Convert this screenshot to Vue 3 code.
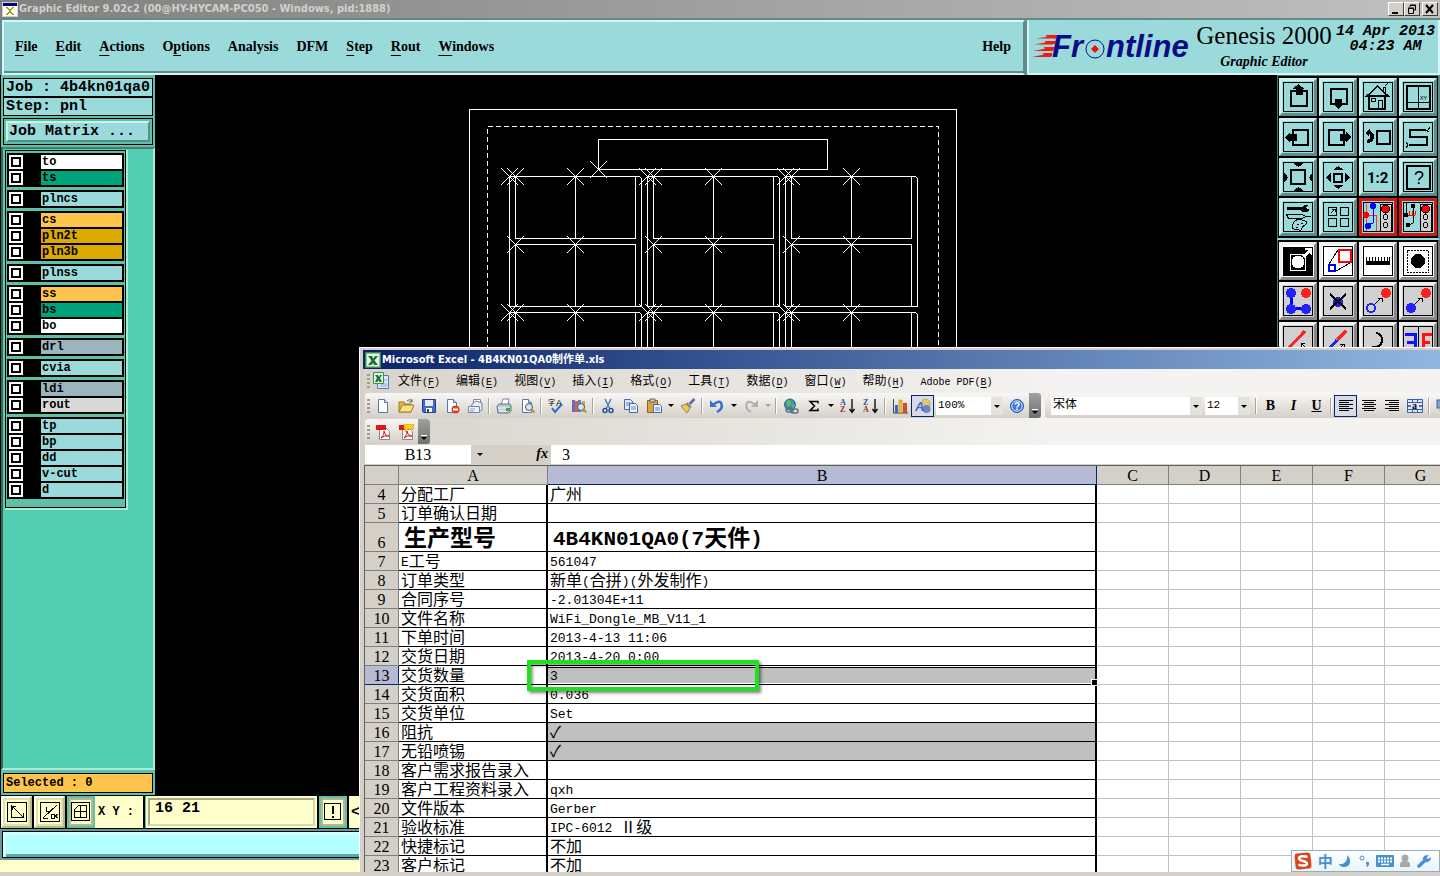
<template>
    <div class="desktop">
        <header class="titlebar">
            <svg class="x-logo" width="16" height="15" viewBox="0 0 16 15" shape-rendering="crispEdges">
                <rect width="16" height="15" fill="#d4d0c8" />
                <rect x="1" y="1" width="14" height="3" fill="#000080" />
                <rect x="1" y="4" width="14" height="10" fill="#fff" />
                <path d="M4 5h2l2 3 2-3h2l-3 4 3 4h-2l-2-3-2 3H4l3-4z" fill="#a8a000" />
            </svg>
            <h1>Graphic Editor 9.02c2 (00@HY-HYCAM-PC050 - Windows, pid:1888)</h1>
            <div class="win-buttons">
                <button aria-label="Minimize"><svg width="12" height="10"><path d="M2 8h6v2H2z" /></svg></button>
                <button aria-label="Restore"><svg width="12" height="10" fill="none" stroke="#000"><path d="M4 3V1.5h5.500V6H8M4 1h6M2.500 4.500h5V9.500h-5zM2 4h6" /></svg></button>
                <button aria-label="Close" class="close"><svg width="12" height="10" stroke="#000" stroke-width="2"><path d="M2 1l7 8M9 1L2 9" /></svg></button>
            </div>
        </header>

        <div class="top">
            <nav class="menubar">
                <button v-for="m in menus" :key="m.text">{{ m.text.slice(0, m.key) }}<u>{{ m.text.slice(m.key, m.key + 1) }}</u>{{ m.text.slice(m.key + 1) }}</button>
                <button class="help">Help</button>
            </nav>
            <div class="brand">
                <svg class="frontline" width="164" height="34" viewBox="0 0 164 34">
                    <g fill="#f01c10">
                        <path d="M4 9.500L26 6v3.500zM2 15.500L22 12l-1 3.500zM1 22l21-4-1 4zM0 28l20-4-1 4z" />
                        <path d="M14 6h12v3H15zM13 12h11v3H14zM12 18h11v3H13zM11 24h9v3H12z" />
                    </g>
                    <g class="logo-text" fill="#0c0c84">
                        <text x="20" y="28">Fr</text>
                        <text x="74" y="28">ntline</text>
                    </g>
                    <circle cx="63" cy="20" r="9" fill="none" stroke="#0c0c84" stroke-width="1" />
                    <path d="M63 16l4 4-4 4-4-4z" fill="#f01010" />
                </svg>
                <div class="product">
                    <strong>Genesis 2000</strong>
                    <em>Graphic Editor</em>
                </div>
                <time>14 Apr 2013<br>04:23 AM</time>
            </div>
        </div>

        <main class="work">
            <aside class="side">
                <div class="job-line">Job : 4b4kn01qa0</div>
                <div class="job-line">Step: pnl</div>
                <div class="matrix"><button>Job Matrix ...</button></div>
                <div class="layer-scroll">
                    <div class="layer-list">
                        <div v-for="(group, g) in layerGroups" :key="g" class="layer-group">
                            <label v-for="l in group" :key="l[0]" class="layer">
                                <input type="checkbox">
                                <span :class="l[1]">{{ l[0] }}</span>
                            </label>
                        </div>
                    </div>
                </div>
                <div class="selected">Selected : 0</div>
            </aside>

            <div class="canvas">
                <svg width="520" height="300" fill="none" stroke="#fff" shape-rendering="crispEdges">
                    <path d="M9.500 300V19.500H496.500V300" />
                    <path d="M27.500 300V36.500H478.500V300" stroke-dasharray="5 3" />
                    <path d="M138.500 49.500h229v30h-229z" />
                    <path :d="cross(138, 79)" />
                    <path v-for="(d, i) in panelPaths" :key="i" :d="d" />
                </svg>
            </div>

            <div class="tools">
                <div class="tool-grid teal">
                    <button v-for="(t, i) in viewTools" :key="i" :class="{ red: i > 13 }" :aria-label="t[0]">
                        <svg width="32" height="32" viewBox="3 3 32 32" v-html="t[1]"></svg>
                    </button>
                </div>
                <div class="tool-grid gray">
                    <button v-for="(t, i) in editTools" :key="i" :class="{ white: i < 4 }" :aria-label="t[0]">
                        <svg width="32" height="32" viewBox="3 3 32 32" v-html="t[1]"></svg>
                    </button>
                </div>
            </div>
        </main>

        <div class="coords">
            <button v-for="(b, i) in coordButtons" :key="i" :class="{ on: i === 2 }" :aria-label="b[0]">
                <svg width="20" height="20" fill="none" stroke="#000" shape-rendering="crispEdges" v-html="b[1]"></svg>
            </button>
            <label for="xy">X Y :</label>
            <div class="xy"><input id="xy" value="16 21"></div>
            <button class="on bang" aria-label="Alert">
                <svg width="18" height="18" fill="none" stroke="#000" shape-rendering="crispEdges"><path d="M.5.5h16v16H.5z" /><path d="M8.500 3v8M8.500 13v2" stroke-width="2" /></svg>
            </button>
            <button class="less">&lt;</button>
        </div>
        <div class="status"><div></div></div>
        <div class="strip"></div>

        <section class="excel">
            <header class="excel-title">
                <svg width="16" height="16" viewBox="0 0 16 16" v-html="excelLogo"></svg>
                <h2>Microsoft Excel - 4B4KN01QA0制作单.xls</h2>
            </header>
            <nav class="excel-menu">
                <i class="grip"></i>
                <svg width="18" height="18" viewBox="0 0 18 18" v-html="docLogo"></svg>
                <button v-for="m in excelMenus" :key="m[0]"><Mixed :text="m[0] + '('" /><u class="half">{{ m[1] }}</u><span class="half">)</span></button>
            </nav>
            <div class="bars">
                <div class="bar">
                    <i class="grip"></i>
                    <template v-for="(t, i) in barTools" :key="i">
                        <i v-if="t === '|'" class="sep"></i>
                        <button v-else-if="t === 'v' || t === 'vg'" class="drop" :class="{ dim: t === 'vg' }" aria-label="More"></button>
                        <button v-else class="tb" :class="{ active: t === 'draw' }" :aria-label="t">
                            <svg width="16" height="16" viewBox="0 0 16 16" v-html="glyphs[t]"></svg>
                        </button>
                    </template>
                    <span class="combo zoom"><select aria-label="Zoom"><option>100%</option></select></span>
                    <button class="tb" aria-label="Help"><svg width="16" height="16" viewBox="0 0 16 16" v-html="glyphs.help"></svg></button>
                    <button class="overflow" aria-label="Toolbar options"></button>
                </div>
                <div class="bar grow">
                    <i class="grip"></i>
                    <span class="combo font"><select aria-label="Font"><option>宋体</option></select></span>
                    <span class="combo size"><select aria-label="Size"><option>12</option></select></span>
                    <i class="sep"></i>
                    <button class="tb letter"><b>B</b></button>
                    <button class="tb letter"><i>I</i></button>
                    <button class="tb letter"><u>U</u></button>
                    <i class="sep"></i>
                    <button v-for="a in ['left', 'center', 'right', 'merge']" :key="a" class="tb" :class="{ active: a === 'left' }" :aria-label="a">
                        <svg width="16" height="16" viewBox="0 0 16 16" v-html="glyphs[a]"></svg>
                    </button>
                    <i class="sep"></i>
                    <button class="tb" aria-label="Currency"><svg width="16" height="16" viewBox="0 0 16 16" v-html="glyphs.money"></svg></button>
                </div>
            </div>
            <div class="bars second">
                <div class="bar">
                    <i class="grip"></i>
                    <button v-for="p in ['pdf', 'pdfMail']" :key="p" class="tb" :aria-label="p">
                        <svg width="16" height="16" viewBox="0 0 16 16" v-html="glyphs[p]"></svg>
                    </button>
                    <button class="overflow" aria-label="Toolbar options"></button>
                </div>
            </div>
            <div class="formula">
                <input class="name-box" value="B13" aria-label="Name box">
                <button class="drop" aria-label="Names"></button>
                <em>fx</em>
                <input class="formula-box" value="3" aria-label="Formula">
            </div>
            <div class="sheet">
                <table>
                    <colgroup>
                        <col class="w-num"><col class="w-a"><col class="w-b">
                        <col v-for="c in spare" :key="c" class="w-c">
                    </colgroup>
                    <thead>
                        <tr>
                            <th></th>
                            <th>A</th>
                            <th class="picked">B</th>
                            <th v-for="c in spare" :key="c">{{ c }}</th>
                        </tr>
                    </thead>
                    <tbody>
                        <tr v-for="(row, i) in rows" :key="i" :class="{ tall: i === 2, current: i === 9 }">
                            <th>{{ i + 4 }}</th>
                            <td class="a"><div class="cell"><Mixed :text="row[0]" /></div></td>
                            <td class="b" :class="{ fill: row[2] }"><div class="cell"><Mixed :text="row[1]" /></div></td>
                            <td v-for="c in spare" :key="c"></td>
                        </tr>
                    </tbody>
                </table>
                <div class="mark"></div>
            </div>
        </section>

        <div class="ime">
            <svg width="18" height="18" viewBox="0 0 18 18">
                <rect x="1" y="1" width="16" height="16" rx="3" fill="#d9461c" transform="rotate(-6 9 9)" />
                <path d="M13.500 5C10 3.500 5 4 5 6.500S13 9 13 11.500 7 14 4.500 12.500" fill="none" stroke="#fff" stroke-width="2.500" />
            </svg>
            <span>中</span>
            <svg width="14" height="14" viewBox="0 0 14 14"><path d="M9 1c5 4 4 12-3 12-3 0-5-2-5-3 5 1 9-3 8-9z" fill="#4a8fd0" /></svg>
            <svg width="12" height="14" viewBox="0 0 12 14"><circle cx="4" cy="4" r="2" fill="none" stroke="#4a8fd0" /><path d="M8 8h3v2q0 2-2 3l-1-.5q1-1 1-2H8z" fill="#4a8fd0" /></svg>
            <svg width="18" height="12" viewBox="0 0 18 12"><rect width="18" height="12" rx="1" fill="#4a8fd0" /><path d="M2 3.500h14M2 6.500h14" stroke="#fff" stroke-width="2" stroke-dasharray="2 1" /><path d="M5 9.500h8" stroke="#fff" stroke-width="1.500" /></svg>
            <svg width="12" height="14" viewBox="0 0 12 14" fill="#a8a8a8"><circle cx="6" cy="4" r="3.500" /><path d="M1 13V10q0-3 5-3t5 3v3z" /></svg>
            <svg width="14" height="14" viewBox="0 0 14 14"><path d="M2 12L8.500 6" stroke="#4a8fd0" stroke-width="3.500" stroke-linecap="round" /><path d="M12 1L9.500 4l1.500 1 2.500-2q1 4-3 5T6 5t6-4z" fill="#4a8fd0" /></svg>
        </div>
    </div>
</template>

<script setup>
import { h } from 'vue'

// key: index of the underlined letter, past the end when there is none
const menus = [
    { text: 'File', key: 0 },
    { text: 'Edit', key: 0 },
    { text: 'Actions', key: 0 },
    { text: 'Options', key: 1 },
    { text: 'Analysis', key: 8 },
    { text: 'DFM', key: 3 },
    { text: 'Step', key: 0 },
    { text: 'Rout', key: 0 },
    { text: 'Windows', key: 0 }
]

const layerGroups = [
    [['to', 'white'], ['ts', 'green']],
    [['plncs', 'aqua']],
    [['cs', 'orange'], ['pln2t', 'gold'], ['pln3b', 'gold']],
    [['plnss', 'aqua']],
    [['ss', 'orange'], ['bs', 'green'], ['bo', 'white']],
    [['drl', 'slate']],
    [['cvia', 'aqua']],
    [['ldi', 'slate'], ['rout', 'silver']],
    [['tp', 'aqua'], ['bp', 'aqua'], ['dd', 'aqua'], ['v-cut', 'aqua'], ['d', 'aqua']]
]

// Panel drawing
function cross(x, y) {
    return `M${x - 8} ${y - 8}l17 17M${x + 9} ${y - 8}l-17 17`
}

function panel(x, y) {
    return [
        `M${x + 0.5} ${y + 130.5}V${y + 0.5}h130l2 2v128z`,
        `M${x + 6.5} ${y + 0.5}v62h120v-62M${x + 66.5} ${y}v62`,
        `M${x + 6.5} ${y + 130}V${y + 68.5}h120v62M${x + 66.5} ${y + 68}v62`,
        cross(x, y), cross(x + 6, y), cross(x + 66, y),
        cross(x + 6, y + 68), cross(x + 66, y + 68)
    ].join('')
}

const panelPaths = []
for (const y of [86, 222]) {
    for (const x of [49, 187, 325]) panelPaths.push(panel(x, y))
}

// Tool icons, drawn on a 38px button
const frame = '<path d="M4.500 4.500h29v29h-29z" fill="none" stroke="#000"/>'
const box = (x, y, w, hgt, sw = 2) => `<rect x="${x}" y="${y}" width="${w}" height="${hgt}" fill="none" stroke="#000" stroke-width="${sw}"/>`
const lights = '<rect x="21" y="6" width="11" height="27" fill="#d0d0d0" stroke="#000"/><circle cx="26.500" cy="11" r="4" fill="#f00" stroke="#000"/><circle cx="26.500" cy="19" r="2.500" fill="none" stroke="#000"/><circle cx="26.500" cy="27" r="2.500" fill="none" stroke="#000"/>'

const viewTools = [
    ['Pan up', frame + box(12, 13, 16, 15) + '<path d="M19.500 6l6 5h-2v6h-7v-6h-3z"/>'],
    ['Pan down', frame + box(12, 11, 16, 15) + '<path d="M16 21h7v5h2l-5.500 5-5.500-5h2z"/>'],
    ['Home', frame + '<g fill="none" stroke="#000"><path d="M10 18v13h16V18M8 18L18.500 8 29 18z" stroke-width="1.500"/><path d="M24.500 13V9h2v6M26 8l3-3"/><path d="M12.500 20.500h4v3h-4zM19.500 31v-9h4v9"/></g>'],
    ['Coordinates', frame + box(8, 8, 23, 23) + '<path d="M19.500 8v23M8 24.500h23" stroke="#000"/><text x="21" y="22" font-size="6" font-family="Liberation Mono">XY</text>'],
    ['Pan left', frame + box(14, 12, 15, 15) + '<path d="M6 19l5-5v2h7v7h-7v2z"/>'],
    ['Pan right', frame + box(10, 12, 15, 15) + '<path d="M32 19l-5-5v2h-6v7h6v2z"/>'],
    ['Previous view', frame + box(18, 13, 13, 13) + '<path d="M6 15l5-5v3q5 2 4 7t-7 5v-3q4-1 3-5l-1-1v3z"/>'],
    ['Serpentine', frame + '<path d="M27 12H11v7h17v8H10" fill="none" stroke="#000" stroke-width="2"/><path d="M31 9l-2 3h-2l3 2M7 24l2 3-2 3" fill="none" stroke="#000"/>'],
    ['Zoom out', frame + box(12, 12, 14, 14) + '<path d="M14 5h11l-5.500 4zM14 33h11l-5.500-4zM5 14v11l4-5.500zM34 14v11l-4-5.500z"/>'],
    ['Zoom in', frame + box(15, 16, 8, 8) + '<path d="M14 12l5.500-4 5 4zM14 27l5.500 4 5-4zM12 14v11l-5-5.500zM26 14v11l5-5.500z"/>'],
    ['Scale', frame + '<text x="8" y="25" font-size="15" font-weight="700" font-family="Roboto">1:2</text>'],
    ['Query', frame + box(8, 8, 23, 23) + '<text x="15" y="26" font-size="18" font-family="Liberation Sans">?</text>'],
    ['Setup', frame + '<path d="M8 9h15l2-2h4l-2 2 1 2 3 1-3 2h-5l-1-2H8z"/><path d="M7.500 16.500h15l5 2h4M7.500 16.500l2 4h13l5-2M17 31q-5 1-3-5t9-4 4 4-4 4q0 4-6 1z" fill="none" stroke="#000"/><path d="M18 26h2M22 25h2M17 29h2" stroke="#000"/>'],
    ['Panels', frame + '<g fill="none" stroke="#000"><path d="M9.500 9.500h8v8h-8zM21.500 9.500h8v8h-8zM9.500 20.500h8v8h-8zM21.500 20.500h8v8h-8z"/><path d="M12 15l4-4h-3M16 11v3"/></g>'],
    ['Net check', frame + lights + '<path d="M7 6v27M7 17h10v16" stroke="#f33" fill="none"/><path d="M14 8v17l-5 2" stroke="#00f" fill="none"/><circle cx="14" cy="8" r="3" fill="#00f"/><circle cx="7" cy="17" r="3" fill="#f00"/><circle cx="9" cy="28" r="3" fill="#00f"/>'],
    ['Net compare', frame + lights + '<path d="M7 5v12M14 8v17l-6 3" stroke="#000" fill="none"/><path d="M8 17h8M10 13v4M13 13v4M16 13v4" stroke="#f00"/><circle cx="14" cy="8" r="2.500"/><circle cx="7" cy="17" r="2.500"/><circle cx="9" cy="27" r="2.500"/>']
]

const editTools = [
    ['Zoom area', '<path d="M4 5h30v29H4z"/><path d="M11.500 12.500h15v16h-15z" fill="none" stroke="#fff"/><circle cx="19" cy="20" r="6.500" fill="#fff"/><path d="M22 12h3l4-4h-3V6h7v7l-3-2-5 5z" fill="#fff"/>'],
    ['Scale shape', frame + '<path d="M20 8h12v12H20z" fill="none" stroke="#f00" stroke-width="2"/><path d="M10 23h6v6h-6z" fill="none" stroke="#00f" stroke-width="2"/><path d="M10 22L19 8M17 29l14-8" stroke="#000"/>'],
    ['Measure', frame + '<path d="M7 23v-8h1v4h2v-4h1v4h2v-4h1v4h2v-4h1v4h2v-4h1v4h2v-4h1v4h2v-4h1v4h2v-4h1v4h1v-4h1v8z"/>'],
    ['Select area', frame + '<path d="M8.500 8.500h21v22h-21z" fill="none" stroke="#000" stroke-dasharray="2 1"/><circle cx="19" cy="19" r="7"/>'],
    ['Connect', frame + '<path d="M12 11v15h15" fill="none" stroke="#00f" stroke-width="3"/><g fill="#22f"><circle cx="12" cy="11" r="5"/><circle cx="12" cy="27" r="5"/><circle cx="27" cy="27" r="5"/></g><circle cx="27" cy="11" r="5" fill="#f22"/>'],
    ['Delete', frame + '<circle cx="19" cy="20" r="5" fill="#22c"/><path d="M11 12l16 15M27 12L11 27" stroke="#000" stroke-width="2"/>'],
    ['Move', frame + '<circle cx="27" cy="11" r="5" fill="#f22"/><circle cx="12" cy="26" r="4" fill="none" stroke="#22f" stroke-width="2"/><path d="M16 22l6-6M19 16h4v4" fill="none" stroke="#000"/>'],
    ['Copy', frame + '<circle cx="27" cy="11" r="5" fill="#f22"/><circle cx="12" cy="26" r="5" fill="#22f"/><path d="M16 22l6-6M19 16h4v4" fill="none" stroke="#000"/>'],
    ['Line', frame + '<path d="M8 28L26 9" stroke="#f22" stroke-width="3"/><path d="M28 27l-6-6M22 25v-4h4" fill="none" stroke="#000"/>'],
    ['Split line', frame + '<path d="M18 18l9-9" stroke="#f22" stroke-width="3"/><path d="M9 28l9-10" stroke="#22f" stroke-width="3"/><path d="M20 27l5-5M21 22h4v4" fill="none" stroke="#000"/>'],
    ['Rotate', frame + '<path d="M17 11q7 1 6 8t-10 6" fill="none" stroke="#000" stroke-width="2"/>'],
    ['Mirror', frame + '<path d="M6 12h10v18M16 20H8" fill="none" stroke="#11f" stroke-width="3"/><path d="M19.500 5v29" stroke="#000"/><path d="M33 12H24v18M24 20h7" fill="none" stroke="#f11" stroke-width="3"/>']
]

const coordButtons = [
    ['Snap', '<path d="M.5.5h19v19H.5zM4.500 3v12h12M5 4l11 11M5 8V4h4M12 15h4v-4"/>'],
    ['Angle', '<path d="M.5.5h19v19H.5zM3 16L17 3M6 5v4h3M3 16.500h5M11 12h3v4h-3zM18 12l-3 2 3 2"/>'],
    ['Grid', '<path d="M.5.5h18v18H.5zM7.500 3.500h8v12h-12v-8zM3 9.500h13M9.500 3v13"/>']
]

// Spreadsheet
// Latin runs are half the width of a Chinese character
const Mixed = (props) => (props.text.match(/[\u2000-\u9fff]+|[^\u2000-\u9fff]+/g) || [])
    .map((run) => h('span', { class: run.charCodeAt(0) < 0x2000 ? 'half' : 'full' }, run))
Mixed.props = ['text']

const excelMenus = [
    ['文件', 'F'], ['编辑', 'E'], ['视图', 'V'], ['插入', 'I'], ['格式', 'O'],
    ['工具', 'T'], ['数据', 'D'], ['窗口', 'W'], ['帮助', 'H'], ['Adobe PDF', 'B']
]

const spare = ['C', 'D', 'E', 'F', 'G']

const rows = [
    ['分配工厂', '广州'],
    ['订单确认日期', ''],
    ['生产型号', '4B4KN01QA0(7天件)'],
    ['E工号', '561047'],
    ['订单类型', '新单(合拼)(外发制作)'],
    ['合同序号', '-2.01304E+11'],
    ['文件名称', 'WiFi_Dongle_MB_V11_1'],
    ['下单时间', '2013-4-13 11:06'],
    ['交货日期', '2013-4-20 0:00'],
    ['交货数量', '3', true],
    ['交货面积', '0.036'],
    ['交货单位', 'Set'],
    ['阻抗', '✓', true],
    ['无铅喷锡', '✓', true],
    ['客户需求报告录入', ''],
    ['客户工程资料录入', 'qxh'],
    ['文件版本', 'Gerber'],
    ['验收标准', 'IPC-6012 Ⅱ级'],
    ['快捷标记', '不加'],
    ['客户标记', '不加']
]

const barTools = [
    'new', 'open', 'save', 'permission', 'mail', '|', 'print', 'preview', '|', 'spell', 'research', '|',
    'cut', 'copy', 'paste', 'v', 'painter', '|', 'undo', 'v', 'redo', 'vg', '|', 'link', 'sum', 'v',
    'sortUp', 'sortDown', '|', 'chart', 'draw'
]

const page = '<path d="M3.500 1.500h6l3 3v10h-9z" fill="#fff" stroke="#5a78a8"/><path d="M9.500 1.500v3h3" fill="#dce6f4" stroke="#5a78a8"/>'
const lens = '<circle cx="10" cy="9" r="3.500" fill="#cfe6f8" stroke="#556"/><path d="M12.500 11.500l3 3" stroke="#c8902c" stroke-width="2"/>'
const sort = (a, b) => `<text x="0" y="7" font-size="8" font-weight="700" font-family="Liberation Serif" fill="#2850a0">${a}</text><text x="0" y="14" font-size="8" font-weight="700" font-family="Liberation Serif" fill="#a02c20">${b}</text><path d="M12 1v13M9.500 11l2.500 3.500 2.500-3.500" fill="none" stroke="#000" stroke-width="1.300"/>`
const align = (xs) => `<path d="${xs.map(([x, w], i) => `M${x} ${2.5 + i * 2}h${w}`).join('')}" stroke="#000" shape-rendering="crispEdges"/>`
const acrobat = '<path d="M4.500 3.500h6l4 4v8h-10z" fill="#fff" stroke="#888"/><path d="M1 1h10v5H1z" fill="#e01818"/><path d="M6 14q4-4 3-7 1 5 5 5-5-1-8 2z" fill="none" stroke="#d01010"/>'

const glyphs = {
    new: page,
    open: '<path d="M1 14V4h5l1 2h6v8z" fill="#e8b840" stroke="#a87818"/><path d="M1 14l3-7h12l-3 7z" fill="#fbe08a" stroke="#a87818"/><path d="M9 3q3-3 5 0M14 1v3h-3" fill="none" stroke="#567"/>',
    save: '<path d="M1.500 1.500h13v13h-12l-1-1z" fill="#4468c8" stroke="#233c8c"/><path d="M4 2h8v6H4z" fill="#e4ecfa"/><path d="M5 10h6v4H5z" fill="#fff"/><path d="M6 11h2v3H6z" fill="#233c8c"/>',
    permission: page + '<circle cx="11.500" cy="11.500" r="4" fill="#d84028"/><path d="M9 11.500h5" stroke="#fff" stroke-width="2"/>',
    mail: '<path d="M6.500 1.500h7v8h-7z" fill="#fff" stroke="#7a8cac"/><path d="M5 6L9 3l6 2v7l-3 2H4z" fill="#e8eef8" stroke="#6a80a8"/><path d="M1.500 8.500h11v6h-11z" fill="#f0f4fa" stroke="#7088a8"/><path d="M3 11h5M3 13h4" stroke="#8aa0c0"/>',
    print: '<path d="M5 7l2-6h6l-1 6z" fill="#fff" stroke="#7088a0"/><path d="M1 8l2-2h11l1 2v5l-2 2H2z" fill="#b8c8d4" stroke="#607488"/><path d="M2 10h11M3 13h8" stroke="#fff"/><path d="M10 10h4v3h-4z" fill="#38a838"/>',
    preview: page + lens,
    spell: '<text x="0" y="7" font-size="7" font-family="Noto Sans CJK SC">字</text><text x="8" y="8" font-size="9" font-family="Liberation Sans">A</text><path d="M4 10l3 4 7-8" fill="none" stroke="#2c68c8" stroke-width="2"/>',
    research: '<path d="M1 2h3v12H1z" fill="#7068c0"/><path d="M4 3h3v11H4z" fill="#c86850"/><path d="M7 2h3v12H7z" fill="#4c88b8"/><path d="M11 3h3v11h-3z" fill="#d0a850"/>' + lens,
    cut: '<path d="M5 1l5 10M11 1L6 11" stroke="#5c7cae" stroke-width="1.500"/><circle cx="5" cy="12.500" r="2" fill="none" stroke="#2850a8" stroke-width="1.500"/><circle cx="11" cy="12.500" r="2" fill="none" stroke="#2850a8" stroke-width="1.500"/>',
    copy: '<path d="M1.500 1.500h6l2 2v8h-8z" fill="#dce8fa" stroke="#4868a8"/><path d="M3 5h5M3 7h5" stroke="#5c88c8"/><path d="M6.500 5.500h6l2 2v7h-8z" fill="#eef4fc" stroke="#4868a8"/><path d="M8 9h5M8 11h5" stroke="#5c88c8"/>',
    paste: '<path d="M1.500 2.500h10v12h-10z" fill="#d8a440" stroke="#8c6418"/><path d="M4 1h5v3H4z" fill="#ccc" stroke="#666"/><path d="M7.500 6.500h6l2 2v6h-8z" fill="#eef4fc" stroke="#4868a8"/><path d="M9 10h5M9 12h5" stroke="#5c88c8"/>',
    painter: '<path d="M14.500 1l-5 5" stroke="#6068a8" stroke-width="2.500"/><path d="M7 4l5 5-2 1-4-4z" fill="#889"/><path d="M1 8l5-2 4 4-3 5z" fill="#e8cc60" stroke="#a08430"/>',
    undo: '<path d="M4 7Q11 1 12.500 6t-4.500 8" fill="none" stroke="#3870d0" stroke-width="2.500"/><path d="M1 2v7h7z" fill="#3870d0"/>',
    redo: '<path d="M12 7Q5 1 3.500 6t4.500 8" fill="none" stroke="#b0b0b0" stroke-width="2"/><path d="M15 2v7H8z" fill="#b0b0b0"/>',
    link: '<circle cx="7" cy="6.500" r="5.500" fill="#3c94b0" stroke="#246880"/><path d="M3 4q4-4 5 0t-3 4zM9 6l3 1-2 4z" fill="#60c058"/><rect x="3" y="10" width="7" height="4" rx="2" fill="none" stroke="#567088" stroke-width="1.500"/><rect x="8" y="11" width="7" height="4" rx="2" fill="none" stroke="#567088" stroke-width="1.500"/>',
    sum: '<path d="M12 5.500V3.500H4l4.500 4.500-4.500 4.500h8v-2" fill="none" stroke="#000" stroke-width="1.500"/>',
    sortUp: sort('A', 'Z'),
    sortDown: sort('Z', 'A'),
    chart: '<path d="M1.500 1v14H16" fill="none" stroke="#444"/><path d="M3 7h3v8H3z" fill="#3868d0"/><path d="M7 2h3v13H7z" fill="#f0c038" stroke="#a07818" stroke-width=".5"/><path d="M11 5h4v10h-4z" fill="#d05028"/>',
    draw: '<path d="M7 2l5-1 3 3v4l-4 1z" fill="#e8c868" stroke="#a88428" stroke-width=".5"/><circle cx="11.500" cy="11" r="4" fill="#6c84c0"/><text x="0" y="13" font-size="13" font-style="italic" font-weight="700" font-family="Liberation Sans" fill="#4868b0">A</text>',
    help: '<circle cx="8" cy="8" r="6.500" fill="#3c78d8" stroke="#2458b0"/><circle cx="8" cy="8" r="5.200" fill="none" stroke="#fff" stroke-width=".8"/><text x="5" y="12" font-size="10" font-weight="700" font-family="Liberation Sans" fill="#fff">?</text>',
    left: align([[1, 14], [1, 10], [1, 14], [1, 10], [1, 14], [1, 10]]),
    center: align([[1, 14], [3, 10], [1, 14], [3, 10], [1, 14], [3, 10]]),
    right: align([[1, 14], [5, 10], [1, 14], [5, 10], [1, 14], [5, 10]]),
    merge: '<path d="M.5 1.500h15v13H.5zM.5 4.500h15M.5 11.500h15M5.500 1v3M10.500 1v3M5.500 12v3M10.500 12v3" fill="#dce8fa" stroke="#3c60a8"/><path d="M1 8h3M15 8h-3" stroke="#000"/><text x="5" y="11" font-size="10" font-weight="700" font-family="Liberation Serif">a</text>',
    money: '<rect x="1" y="2" width="14" height="8" fill="#7ca4dc" stroke="#3c60a8"/><ellipse cx="8" cy="12" rx="5" ry="2.500" fill="#e8c048"/>',
    pdf: acrobat,
    pdfMail: acrobat + '<path d="M6 0h10v5h-6l-3 3V5H6z" fill="#f8d020" stroke="#b89010" stroke-width=".5"/>'
}

const excelLogo = '<path d="M0 0h16v16H0z" fill="#3c8c4c"/><path d="M1.500 1.500h13v13h-13z" fill="#e8f4e8"/><path d="M3 4h4l1.500 2.500L10 4h3L9.500 8.500 13 13H9l-1-2-1.500 2H3l3.500-4.500z" fill="#1c7434"/>'
const docLogo = '<path d="M5.500 3.500h11v13h-11z" fill="#dce8fa" stroke="#5878b0"/><path d="M11 8h4M8 12h7M8 14h7" stroke="#88a8d8"/><path d="M1.500.500h10v11h-10z" fill="#e8f4e8" stroke="#3c8c4c"/><path d="M3 3h3l1 2 1-2h2L8 6l2 4H7.500L6.500 8l-1 2H3l2-4z" fill="#1c7434"/>'
</script>

<style>
body {
    background: #000;
}

.half {
    font-family: "Liberation Mono", monospace;
}

.excel-menu .half {
    font-size: 10px;
}

.sheet .half {
    padding-top: 4px;
    font-size: 13px;
    line-height: 14px;
}

.sheet .full {
    padding-bottom: 2px;
}

.sheet .tall .half {
    padding-top: 6px;
    font-size: 21px;
    line-height: 22px;
}
</style>

<style scoped>
* {
    box-sizing: border-box;
}

button,
input,
select {
    margin: 0;
    padding: 0;
    border: 0;
    border-radius: 0;
    background: none;
    font: inherit;
    color: inherit;
    appearance: none;
    outline: none;
}

h1,
h2 {
    margin: 0;
}

.desktop {
    position: relative;
    display: flex;
    flex-direction: column;
    height: 100vh;
    overflow: hidden;
    background: #000;
    color: #000;
    font-family: "Liberation Serif", serif;
}

.titlebar {
    display: flex;
    align-items: center;
    height: 18px;
    padding: 0 2px;
    background: linear-gradient(90deg, #808080, #c0c0c0);
    color: #d4d0c8;
}

.titlebar h1 {
    flex: 1;
    padding-left: 1px;
    font: bold 11px/16px "DejaVu Sans Condensed", "DejaVu Sans", sans-serif;
}

.win-buttons {
    display: flex;
}

.win-buttons button {
    display: flex;
    width: 16px;
    height: 14px;
    padding: 1px;
    background: #d4d0c8;
    border: 1px solid;
    border-color: #fff #404040 #404040 #fff;
}

.win-buttons .close {
    margin-left: 2px;
}

/* Menu and brand */
.top {
    display: flex;
    height: 57px;
    padding-top: 2px;
    background: #5f8b8b;
}

.menubar {
    flex: 1;
    display: flex;
    align-items: center;
    gap: 18px;
    margin-left: 2px;
    padding: 0 12px 2px 11px;
    background: #9bdadb;
    border: 2px solid;
    border-color: #d4f6f4 #5f8b8b #d4f6f4 #d4f6f4;
    box-shadow: inset 0 -2px #5f8b8b;
    font: bold 14px "Liberation Serif", serif;
}

.menubar u {
    text-underline-offset: 4px;
}

.excel-menu u {
    text-underline-offset: 2px;
}

.menubar .help {
    margin-left: auto;
}

.brand {
    display: flex;
    width: 413px;
    margin-left: 2px;
    padding: 1px 2px 0 3px;
    background: #9bdadb;
    border: 2px solid #d4f6f4;
    border-top: 0;
}

.frontline {
    margin-top: 8px;
}

.logo-text {
    font: italic bold 31px "Liberation Sans", sans-serif;
}

.product {
    display: flex;
    flex-direction: column;
    align-items: center;
    width: 136px;
}

.product strong {
    font: normal 25px/30px "Liberation Serif", serif;
    white-space: nowrap;
}

.product em {
    font: italic bold 14px/22px "Liberation Serif", serif;
}

.brand time {
    flex: 1;
    padding: 3px 0 0 3px;
    font: italic bold 15px/15px "Liberation Mono", monospace;
    text-align: center;
    white-space: nowrap;
}

/* Work area */
.work {
    flex: 1;
    display: flex;
    min-height: 0;
}

.side {
    display: flex;
    flex-direction: column;
    width: 155px;
    padding: 3px 2px 2px 2px;
    background: #5fc0a8;
    border-left: 1px solid #000;
    font: bold 15px "Liberation Mono", monospace;
}

.job-line {
    height: 19px;
    padding-left: 2px;
    background: #9bdadb;
    border: 1px solid #000;
    line-height: 17px;
    white-space: pre;
}

.matrix {
    margin: 2px 0;
    padding: 2px;
    border: 1px solid #000;
}

.matrix button {
    display: block;
    width: 100%;
    height: 21px;
    padding-left: 1px;
    background: #9bdadb;
    border: 2px solid;
    border-color: #c8f4f0 #5f8b8b #5f8b8b #c8f4f0;
    text-align: left;
}

.layer-scroll {
    flex: 1;
    margin: 0 -2px 3px -2px;
    padding: 1px 2px;
    background: #54ceb0;
    border: 2px solid;
    border-color: #3f8070 #a8ecd8 #a8ecd8 #2f6b5b;
}

.layer-list {
    display: flex;
    flex-direction: column;
    gap: 3px;
    width: 121px;
    height: 358px;
    padding: 2px 1px 0;
    border: 1px solid #000;
    box-shadow: 1px 1px 0 1px #a8ecd8;
    background: #5fc0a8;
    font-size: 12px;
}

.layer-group {
    padding: 1px;
    background: #000;
}

.layer {
    display: flex;
    justify-content: space-between;
    height: 16px;
    padding: 1px;
}

.layer input {
    width: 14px;
    height: 14px;
    border: 2px solid #fff;
    background: #fff;
    box-shadow: inset 0 0 0 2px #000;
}

.layer span {
    width: 81px;
    padding-left: 1px;
    line-height: 15px;
}

.white { background: #fff; }
.green { background: #00a47c; }
.aqua { background: #9bdadb; }
.orange { background: #ffc44c; }
.gold { background: #dba900; }
.slate { background: #9bb5be; }
.silver { background: #d9d9d9; }

.selected {
    height: 20px;
    padding-left: 2px;
    background: #ffc44c;
    border: 1px solid #000;
    font-size: 12px;
    line-height: 18px;
}

.canvas {
    flex: 1;
    min-width: 0;
    overflow: hidden;
    padding: 15px 0 0 305px;
}

.canvas svg {
    display: block;
}

.tools {
    width: 163px;
}

.tool-grid {
    display: grid;
    grid-template-columns: repeat(4, 38px);
    gap: 2px;
    padding: 2px 2px 2px 1px;
    background: #000;
    border-left: 1px solid #3f8070;
}

.teal {
    border-right: 2px solid #5f8b8b;
    border-top: 1px solid #3f8070;
    border-bottom: 2px solid #9bdadb;
}

.gray {
    border-right: 2px solid #707070;
}

.tool-grid button {
    display: flex;
    width: 38px;
    height: 38px;
    background: #9bdadb;
    border: 3px solid;
    border-color: #c8f0ee #5f8b8b #5f8b8b #c8f0ee;
}

.gray button {
    background: #d0d0d0;
    border-color: #f0f0f0 #888 #888 #f0f0f0;
}

.gray .white {
    background: #fff;
}

.teal .red {
    background: #9bdadb;
    border-color: #d01818;
}

.tool-grid svg {
    flex: none;
    shape-rendering: crispEdges;
}

/* Coordinates and status */
.coords {
    display: flex;
    gap: 2px;
    height: 34px;
    padding: 1px 0 1px 1px;
    background: #000;
    font: bold 15px "Liberation Mono", monospace;
}

.coords button {
    display: flex;
    align-items: center;
    justify-content: center;
    width: 31px;
    background: #ffffcc;
    border: 2px solid;
    border-color: #fffff0 #b8b890 #b8b890 #fffff0;
    box-shadow: inset 0 0 0 2px #e0dfb0;
}

.coords .on {
    width: 28px;
    border: 2px solid #5fc0a8;
    box-shadow: inset 0 0 0 2px #b8b890;
}

.coords label {
    width: 48px;
    margin-left: -2px;
    padding-left: 3px;
    background: #ffffcc;
    font-size: 12px;
    line-height: 32px;
    white-space: nowrap;
}

.coords .xy {
    width: 172px;
    padding: 2px;
    background: #ffffcc;
    border-left: 1px solid #5fc0a8;
}

.xy input {
    width: 100%;
    height: 28px;
    padding: 0 0 7px 5px;
    border: 2px solid;
    border-color: #a8a880 #d8d8b0 #d8d8b0 #a8a880;
}

.coords .less {
    width: 40px;
    padding-left: 2px;
    justify-content: flex-start;
    border: 0;
    box-shadow: none;
}

.status {
    padding: 2px;
    background: #5f9b9b;
}

.status div {
    height: 27px;
    background: #b4ffff;
    border: 1px solid #000;
    box-shadow: inset 3px 3px #d4ffff, inset 0 -3px #5fa8a8;
}

.strip {
    height: 16px;
    background: #ffffcc;
    border-bottom: 4px solid #d4d0c8;
}

/* Spreadsheet window, in front of the editor */
.excel {
    position: absolute;
    top: 347px;
    left: 359px;
    right: 0;
    bottom: 4px;
    display: flex;
    flex-direction: column;
    overflow: hidden;
    padding: 2px 0 0 3px;
    background: #d4d0c8;
    border: 1px solid #fff;
    border-width: 1px 0 0 1px;
    font-family: "Liberation Serif", "Noto Sans CJK SC", serif;
    font-size: 16px;
}

.excel-title {
    display: flex;
    align-items: center;
    gap: 1px;
    height: 19px;
    padding-left: 2px;
    background: linear-gradient(90deg, #0a246a, #92b6e0);
    color: #fff;
}

.excel-title h2 {
    font: bold 11px/18px "DejaVu Sans Condensed", "DejaVu Sans", "Noto Sans CJK SC", sans-serif;
}

.excel-menu {
    display: flex;
    align-items: center;
    height: 24px;
    padding-left: 3px;
    background: linear-gradient(90deg, #d8d4cc, #f4f3f1 65%);
    font: 12px/20px "Noto Sans CJK SC", sans-serif;
}

.excel-menu svg {
    margin: 0 8px 0 1px;
}

.excel-menu button {
    margin-right: 16px;
    white-space: nowrap;
}

.grip {
    width: 3px;
    height: 14px;
    margin: 0 1px;
    background: repeating-linear-gradient(#a09c94 0 2px, transparent 2px 4px);
}

.bars {
    display: flex;
    height: 26px;
    background: linear-gradient(90deg, #d8d4cc, #f4f3f1 65%);
}

.bar {
    display: flex;
    align-items: center;
    height: 25px;
    margin-left: 2px;
    padding-left: 1px;
    background: linear-gradient(#f8f7f5, #d4d0c8);
    border-radius: 3px 0 0 3px;
}

.grow {
    flex: 1;
    margin-left: 4px;
    overflow: hidden;
}

.grow .grip {
    margin-right: 4px;
}

.tb {
    flex: none;
    display: flex;
    align-items: center;
    justify-content: center;
    width: 23px;
    height: 22px;
}

.tb.active {
    border: 1px solid #0a246a;
    background: #d8dce8;
}

.letter {
    font: bold 14px "Liberation Serif", serif;
}

.sep {
    flex: none;
    width: 2px;
    height: 16px;
    margin: 0 2px;
    background: linear-gradient(90deg, #a8a49c 1px, #fff 1px);
}

.drop {
    flex: none;
    display: flex;
    align-items: center;
    justify-content: center;
    width: 11px;
    height: 22px;
}

.drop::before,
.combo::after {
    content: "";
    border: 3px solid transparent;
    border-top: 3px solid #000;
    border-bottom: 0;
}

.dim::before {
    border-top-color: #a0a0a0;
}

.combo {
    flex: none;
    position: relative;
    display: flex;
    height: 18px;
    background: #fff;
}

.combo::after {
    position: absolute;
    right: 3px;
    top: 8px;
}

.combo select {
    width: 100%;
    padding: 0 14px 2px 2px;
    background: linear-gradient(90deg, transparent calc(100% - 12px), #e4e2dc 0);
    font: 12px "Liberation Mono", "Noto Sans CJK SC", monospace;
}

.zoom {
    width: 67px;
    margin: 0 2px;
}

.zoom select,
.size select {
    font-size: 11px;
}

.font {
    width: 151px;
}

.size {
    width: 45px;
    margin: 0 3px;
}

.overflow {
    display: flex;
    flex-direction: column;
    align-items: center;
    justify-content: flex-end;
    gap: 1px;
    width: 12px;
    height: 25px;
    margin-left: 1px;
    padding-bottom: 4px;
    background: linear-gradient(#a0a0a0, #707070);
    border-radius: 0 3px 3px 0;
}

.overflow::before {
    content: "";
    width: 6px;
    height: 1px;
    background: #fff;
}

.overflow::after {
    content: "";
    border: 3px solid transparent;
    border-top-color: #000;
    border-bottom: 0;
}

.formula {
    display: flex;
    height: 20px;
    padding-left: 2px;
    background: #d4d0c8;
}

.formula input {
    height: 19px;
    background: #fff;
}

.name-box {
    width: 106px;
    text-align: center;
}

.formula .drop {
    width: 18px;
    height: 19px;
}

.formula em {
    width: 62px;
    padding-right: 3px;
    font: italic bold 14px/18px "Liberation Serif", serif;
    text-align: right;
}

.formula-box {
    flex: 1;
    padding-left: 11px;
}

.sheet {
    position: relative;
    flex: 1;
    min-height: 0;
    overflow: hidden;
    margin-left: 1px;
    background: #fff;
    border: 1px solid #606060;
    border-right: 0;
    border-bottom: 0;
}

table {
    width: 1092px;
    table-layout: fixed;
    border-collapse: separate;
    border-spacing: 0;
}

.w-num { width: 34px; }
.w-a { width: 149px; }
.w-b { width: 549px; }
.w-c { width: 72px; }

th {
    height: 19px;
    padding: 2px 0 0;
    background: #d4d0c8;
    border: 1px solid #808080;
    border-width: 0 1px 1px 0;
    font-weight: normal;
    line-height: 16px;
}

tbody th {
    vertical-align: bottom;
}

th.picked,
.current th {
    background: #b4bbd2;
    border-color: #0a246a;
}

td {
    height: 19px;
    padding: 0;
    border: 1px solid #c0c0c0;
    border-width: 0 1px 1px 0;
    font: 16px/16px "Noto Sans CJK SC", sans-serif;
}

td.a,
td.b {
    padding-left: 2px;
    border-color: #000;
    border-right-width: 2px;
}

.cell {
    display: flex;
    align-items: center;
    height: 18px;
    white-space: pre;
}

.tall td {
    height: 29px;
    font-size: 23px;
    font-weight: bold;
    line-height: 24px;
}

.tall .cell {
    height: 28px;
    padding-left: 3px;
}

.fill {
    background: #c0c0c0;
}

.current .b {
    position: relative;
    border-bottom: 1px solid #000;
    box-shadow: inset 0 1px #fff, inset 0 2px #000, inset 0 -1px #fff;
}

/* fill handle */
.current .b::after {
    content: "";
    position: absolute;
    right: -3px;
    bottom: -2px;
    width: 5px;
    height: 5px;
    background: #000;
    border: 1px solid #fff;
}

/* Hand-drawn highlight round the quantity */
.mark {
    position: absolute;
    top: 194px;
    left: 162px;
    width: 232px;
    height: 31px;
    border: 4px solid #1fe01f;
    box-shadow: 2px 2px 3px rgba(0, 0, 0, .5), inset 2px 2px 3px rgba(0, 0, 0, .4);
}

.ime {
    position: absolute;
    right: 0;
    bottom: 4px;
    display: flex;
    align-items: center;
    justify-content: space-between;
    width: 149px;
    height: 22px;
    padding: 0 8px 0 2px;
    background: linear-gradient(#fff, #e8f4fc);
    border: 1px solid #8fb0c4;
    color: #4a8fd0;
    font: bold 15px/18px "Noto Sans CJK SC", sans-serif;
}
</style>
